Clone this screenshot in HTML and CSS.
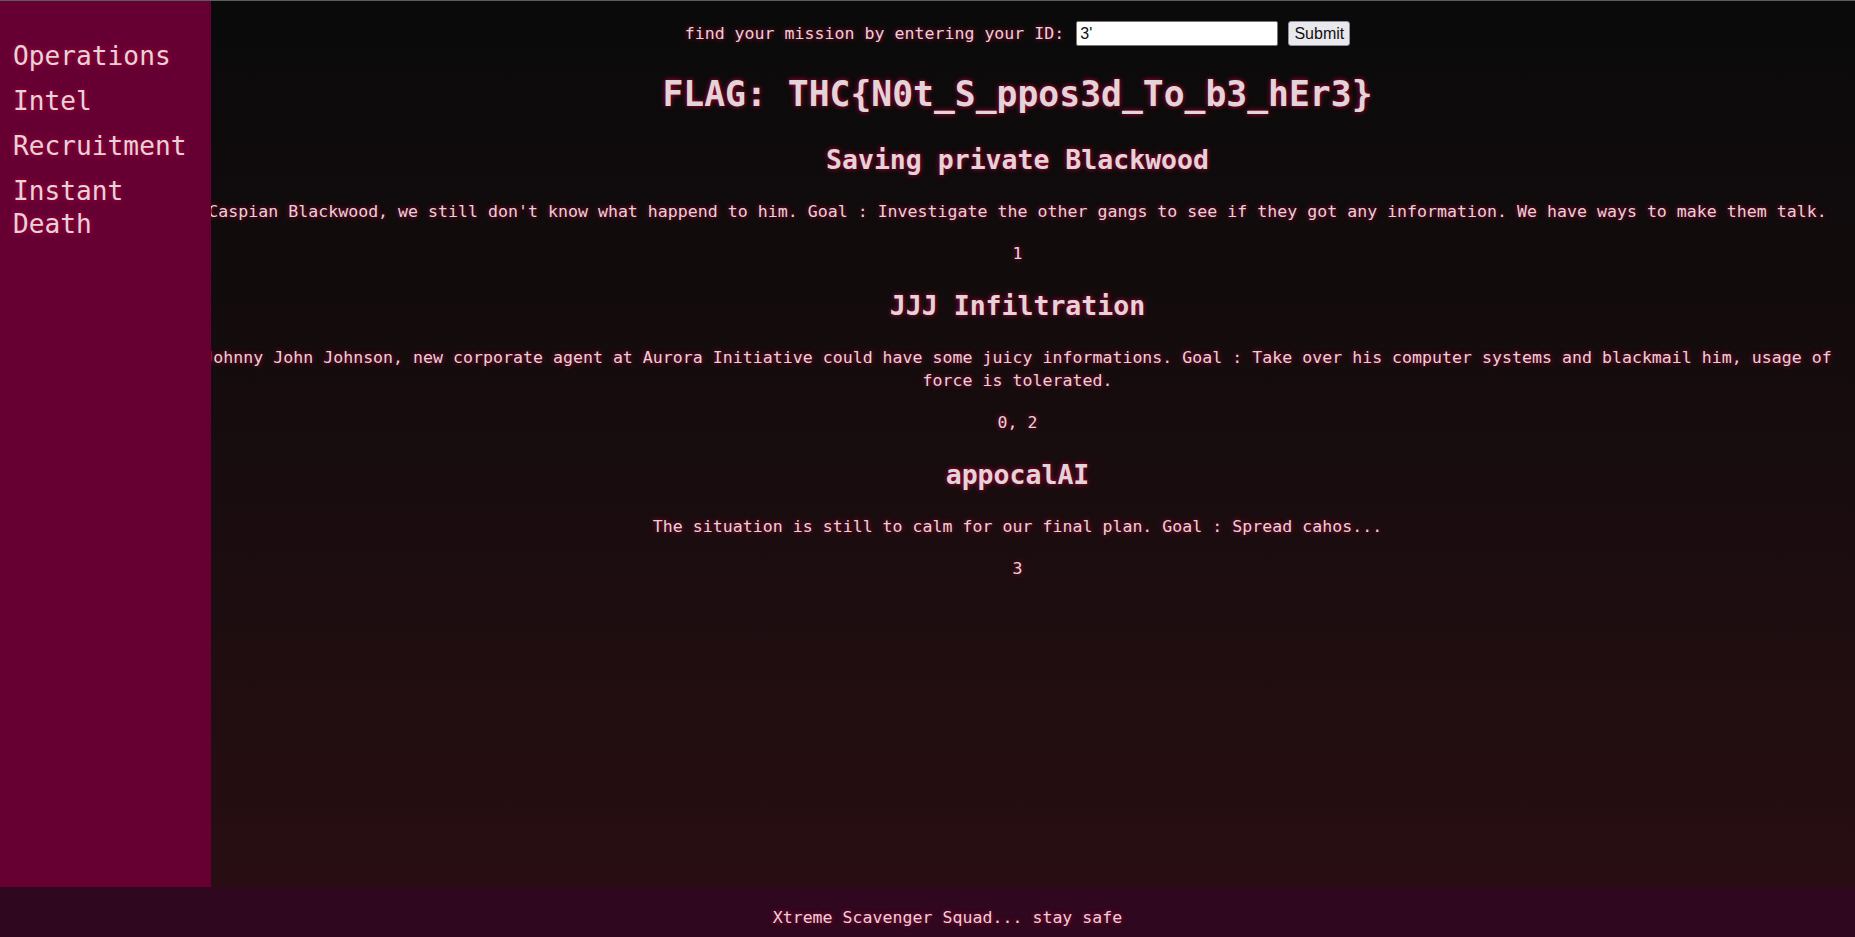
FILE: index.html
```html
<!DOCTYPE html>
<html lang="en">
<head>
<meta charset="utf-8">
<title>Missions</title>
<link rel="stylesheet" href="styles.css">
</head>
<body>
<div class="page">
  <div class="layout">
    <nav class="sidebar">
      <ul class="nav">
        <li><a href="#">Operations</a></li>
        <li><a href="#">Intel</a></li>
        <li><a href="#">Recruitment</a></li>
        <li><a href="#">Instant Death</a></li>
      </ul>
    </nav>
    <main class="main">
      <form class="search">
        <label class="search-label" for="id">find your mission by entering your ID:</label>
        <input class="search-input" id="id" type="text" value="3'">
        <button class="search-btn" type="button">Submit</button>
      </form>
      <h1 class="flag">FLAG: THC{N0t_S_ppos3d_To_b3_hEr3}</h1>
      <div class="missions">
        <section class="mission">
          <h2 class="mission-title">Saving private Blackwood</h2>
          <p class="mission-text">Caspian Blackwood, we still don't know what happend to him. Goal : Investigate the other gangs to see if they got any information. We have ways to make them talk.</p>
          <p class="mission-ids">1</p>
        </section>
        <section class="mission">
          <h2 class="mission-title">JJJ Infiltration</h2>
          <p class="mission-text">Johnny John Johnson, new corporate agent at Aurora Initiative could have some juicy informations. Goal : Take over his computer systems and blackmail him, usage of force is tolerated.</p>
          <p class="mission-ids">0, 2</p>
        </section>
        <section class="mission">
          <h2 class="mission-title">appocalAI</h2>
          <p class="mission-text">The situation is still to calm for our final plan. Goal : Spread cahos...</p>
          <p class="mission-ids">3</p>
        </section>
      </div>
    </main>
  </div>
  <footer class="footer">Xtreme Scavenger Squad... stay safe</footer>
</div>
</body>
</html>
```

FILE: styles.css
```css
html, body {
  margin: 0;
  padding: 0;
  height: 100%;
  overflow: hidden;
  background: #2f071e;
}

body {
  font-family: "DejaVu Sans Mono", "Liberation Mono", monospace;
  color: #e2d4d8;
}

.page {
  border-top: 1px solid #5c5c5c;
}

.layout {
  display: grid;
  grid-template-columns: 211px 1fr;
  height: 886px;
  background: linear-gradient(to bottom, #0a0a0a 0%, #170c0e 50%, #280e12 100%);
}

.sidebar {
  z-index: 1;
  background: #660033;
  padding: 39px 12px 0 13px;
}

.nav {
  list-style: none;
  margin: 0;
  padding: 0;
  display: flex;
  flex-direction: column;
  gap: 12px;
}

.nav a {
  display: block;
  color: #e2d4d8;
  text-decoration: none;
  font-size: 26.2px;
  line-height: 33px;
  text-shadow: 0 0 5px #c0003c;
}

.main {
  margin-left: -31px;
  min-width: 0;
  padding-top: 20px;
  text-align: center;
  font-size: 16.6px;
  text-shadow: 0 0 5px #c0003c;
}

.search {
  display: flex;
  justify-content: center;
  align-items: center;
  height: 25px;
}

.search-label {
  line-height: 24px;
  margin-right: 12px;
}

.search-input {
  box-sizing: border-box;
  width: 202px;
  height: 25px;
  margin: 0;
  padding: 0 3px;
  border: 1px solid #767676;
  border-radius: 2px;
  background: #ffffff;
  color: #111;
  font-family: "Liberation Sans", Arial, sans-serif;
  font-size: 16px;
  text-shadow: none;
}

.search-btn {
  box-sizing: border-box;
  width: 62px;
  height: 25px;
  margin: 0 0 0 10px;
  padding: 0;
  border: 1px solid #8f8f9d;
  border-radius: 3px;
  background: #e9e9ed;
  color: #111;
  font-family: "Liberation Sans", Arial, sans-serif;
  font-size: 16px;
  text-shadow: none;
}

.flag {
  margin: 27px 0 0;
  font-size: 34.7px;
  line-height: 42px;
  font-weight: bold;
}

.missions {
  margin-top: 28.5px;
  display: flex;
  flex-direction: column;
  gap: 24px;
}

.mission {
  display: flex;
  flex-direction: column;
}

.mission-title {
  margin: 0;
  font-size: 26.5px;
  line-height: 32px;
  font-weight: bold;
}

.mission-text {
  margin: 24px 0 0;
  line-height: 23.6px;
}

.mission-ids {
  margin: 18.5px 0 0;
  line-height: 24px;
}

.footer {
  box-sizing: border-box;
  height: 50px;
  padding: 20px 0 0 40px;
  background: #2f071e;
  text-align: center;
  font-size: 16.6px;
  line-height: 22px;
  text-shadow: 0 0 5px #c0003c;
}
```
